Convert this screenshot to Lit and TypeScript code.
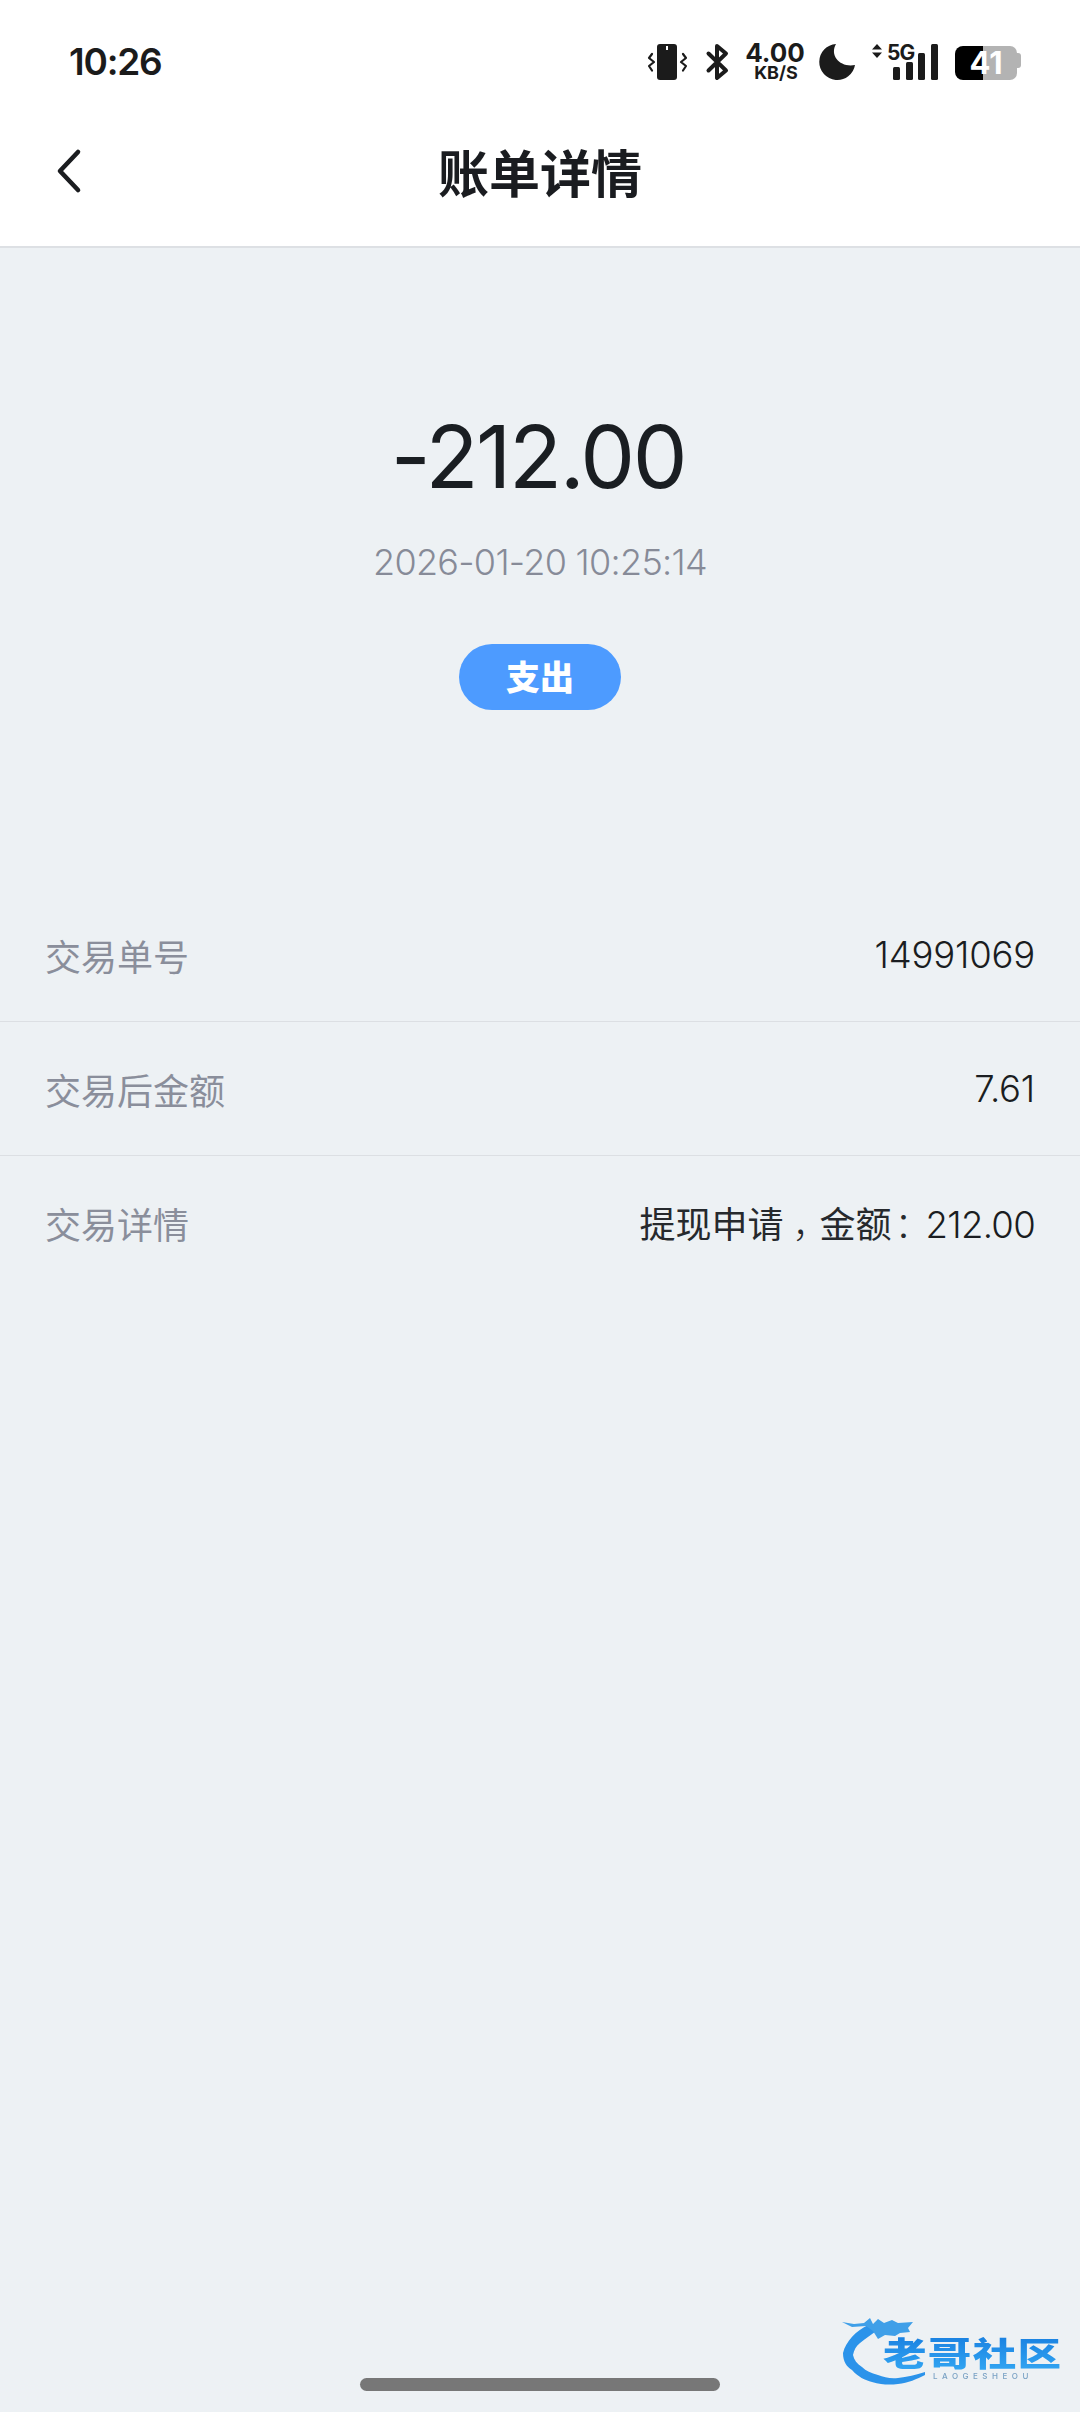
import { LitElement, html, css, svg } from "lit";
import { customElement } from "lit/decorators.js";

@customElement("app-root")
export class AppRoot extends LitElement {
  static styles = css`
    :host {
      display: block;
      position: relative;
      width: 1080px;
      height: 2412px;
      overflow: hidden;
      background: #edf1f4;
      font-family: Inter, "Noto Sans CJK SC", sans-serif;
      color: #1a1d21;
    }
    .top { background: #fff; height: 246px; border-bottom: 2px solid #dde0e4; display: flex; flex-direction: column; }
    .status { height: 122px; display: flex; align-items: flex-start; justify-content: space-between; }
    .time { font-family: Inter, sans-serif; font-weight: 600; font-size: 37px; line-height: 45px; margin: 39px 0 0 69px; letter-spacing: -1.2px; color: #1b1b1b; }
    .icons { display: block; width: 400px; height: 60px; margin: 34px 50px 0 0; overflow: visible; }
    .icons text { font-family: Inter, sans-serif; font-weight: 700; fill: #1b1b1b; }
    .nav { flex: 1; position: relative; display: flex; align-items: center; justify-content: center; }
    .back { position: absolute; left: 50px; top: 20px; width: 40px; height: 56px; }
    .title { font-family: "Noto Sans CJK SC", sans-serif; font-size: 51px; font-weight: 700; line-height: 60px; margin-top: -26px; color: #1a1c20; }
    .hero { display: flex; flex-direction: column; align-items: center; height: 640px; }
    .amount { font-size: 87px; font-weight: 400; line-height: 104px; margin-top: 157px; padding-right: 4px; color: #1a1e22; letter-spacing: -2.4px; }
    .minus { margin-right: -3px; }
    .date { font-size: 36px; font-weight: 300; line-height: 44px; margin-top: 31px; color: #878b98; letter-spacing: -0.7px; }
    .pill { width: 162px; height: 66px; border-radius: 33px; background: #4d9bff; color: #fff; font-family: "Noto Sans CJK SC", sans-serif; font-weight: 900; font-size: 34px; line-height: 64px; text-align: center; margin-top: 60px; }
    .row { height: 134px; box-sizing: border-box; padding: 0 45px; display: flex; justify-content: space-between; align-items: center; border-bottom: 1px solid #dcdfe3; font-size: 36px; line-height: 44px; }
    .row:last-child { border-bottom: 0; }
    .k { color: #8a8e9b; font-weight: 400; font-family: "Noto Sans CJK SC", sans-serif; }
    .v { color: #1a1d21; font-weight: 300; font-size: 36.5px; letter-spacing: -0.2px; padding-top: 1px; }
    .cn { font-family: "Noto Sans CJK SC", sans-serif; font-size: 36px; font-weight: 400; letter-spacing: 0; color: #26292d; }
    .p { font-weight: 300; font-feature-settings: "halt"; padding: 0 9px; }
    .c { font-weight: 300; font-feature-settings: "halt"; padding: 0 13px 0 3px; }
    .d { letter-spacing: -0.7px; }
    .home { position: absolute; left: 360px; top: 2378px; width: 360px; height: 13px; border-radius: 6.5px; background: #777; }
    .mark { position: absolute; left: 840px; top: 2314px; width: 226px; height: 72px; filter: blur(0.6px); }
    .mark text { font-family: "Noto Sans CJK SC", sans-serif; font-weight: 900; }
    .mark .en { font-family: Inter, sans-serif; font-weight: 500; }
  `;

  private icons() {
    return svg`
      <g transform="translate(-630 -34)">
        <path d="M660 44h14a3 3 0 0 1 3 3v30a3 3 0 0 1-3 3h-14a3 3 0 0 1-3-3V47a3 3 0 0 1 3-3z" fill="#1b1b1b"/>
        <rect x="666" y="46" width="2" height="4" fill="#fff"/>
        <path d="M652 54l-3 4 5 4-5 4 3 4.500M683 54l3 4-5 4 5 4-3 4.500" fill="none" stroke="#1b1b1b" stroke-width="2.200" stroke-linecap="round" stroke-linejoin="round"/>
        <path d="M708.500 53.500l17.500 17-9 7.500V46l9 7.500-17.500 17" fill="none" stroke="#1b1b1b" stroke-width="4" stroke-linecap="round" stroke-linejoin="round"/>
        <text x="775" y="62" font-size="26" text-anchor="middle">4.00</text>
        <text x="776" y="79" font-size="18" text-anchor="middle">KB/S</text>
        <path d="M836 44A18 18 0 1 0 855 65C841 68 829 56 836 44z" fill="#1b1b1b"/>
        <path d="M877 44l5 5.500h-10zM877 58l5-5.500h-10z" fill="#1b1b1b"/>
        <text x="887" y="60" font-size="21" letter-spacing="-0.8">5G</text>
        <rect x="893" y="67" width="7" height="13" rx="1.500" fill="#1b1b1b"/>
        <rect x="906" y="62" width="7" height="18" rx="1.500" fill="#1b1b1b"/>
        <rect x="918" y="53" width="7" height="27" rx="1.500" fill="#1b1b1b"/>
        <rect x="931" y="44" width="7" height="36" rx="1.500" fill="#1b1b1b"/>
        <path d="M1017 53h1a3 3 0 0 1 3 3v9a3 3 0 0 1-3 3h-1z" fill="#b3b3b3"/>
        <path d="M983 46h27a7 7 0 0 1 7 7v20a7 7 0 0 1-7 7h-27z" fill="#b3b3b3"/>
        <path d="M963 46h20v34h-20a8 8 0 0 1-8-8V54a8 8 0 0 1 8-8z" fill="#000"/>
        <text x="986" y="74" font-size="31" text-anchor="middle" style="fill:#fff">41</text>
      </g>`;
  }

  render() {
    return html`
      <div class="top">
        <div class="status">
          <div class="time">10:26</div>
          <svg class="icons" viewBox="0 0 400 60">${this.icons()}</svg>
        </div>
        <div class="nav">
          <svg class="back" viewBox="0 0 40 56"><path d="M28 10 L10 29 L28 48" fill="none" stroke="#1b1d20" stroke-width="4.600" stroke-linecap="round" stroke-linejoin="round"/></svg>
          <div class="title">账单详情</div>
        </div>
      </div>
      <div class="hero">
        <div class="amount"><span class="minus">-</span>212.00</div>
        <div class="date">2026-01-20 10:25:14</div>
        <div class="pill">支出</div>
      </div>
      <div class="list">
        <div class="row"><span class="k">交易单号</span><span class="v">14991069</span></div>
        <div class="row"><span class="k">交易后金额</span><span class="v">7.61</span></div>
        <div class="row"><span class="k">交易详情</span><span class="v"><span class="cn">提现申请<span class="p">，</span>金额<span class="c">：</span></span><span class="d">212.00</span></span></div>
      </div>
      <div class="home"></div>
      <svg class="mark" viewBox="0 0 226 72">
        <defs>
          <linearGradient id="g" x1="0" y1="0" x2="0" y2="1"><stop offset="0" stop-color="#1478dc"/><stop offset="1" stop-color="#35aaf5"/></linearGradient>
        </defs>
        <path d="M28 11 C16 17 6 27 3 39 C3 48 7 53 12 56 C18 63 25 66 32 68 C42 71 50 71 58 70 C68 69 77 65 85 61 L85 58 C76 61 67 63 58 64 C50 65 44 63 38 61 C31 59 26 57 22 53 C17 50 14 46 13 41 C14 36 16 32 20 29 C26 24 32 20 38 16 Z" fill="#2b93ea"/>
        <path d="M2 8 L14 10 L24 9 L30 4 L33 10 L38 5 L44 9 L52 6 L58 9 L73 8 L68 14 L70 18 L60 19 L55 22 L45 21 L38 25 L33 17 L26 12 L12 13 Z" fill="#3f9fe8"/>
        <text transform="translate(43 52) scale(1.32 1)" font-size="33" letter-spacing="1" fill="url(#g)">老哥社区</text>
        <text class="en" x="93" y="65" font-size="8" letter-spacing="4.500" fill="#7aa2c4">LAOGESHEOU</text>
      </svg>
    `;
  }
}
